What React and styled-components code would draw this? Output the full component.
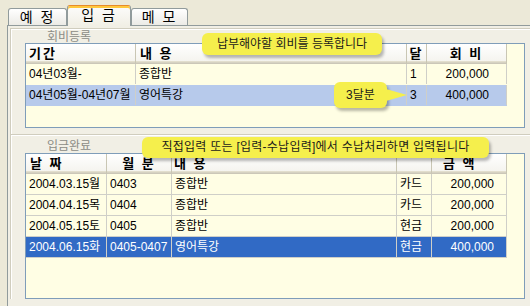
import styled, { createGlobalStyle } from "styled-components";

const GlobalStyle = createGlobalStyle`
  html, body {
    margin: 0;
    padding: 0;
    background: #ece9d8;
    overflow: hidden;
  }
  body {
    font-family: "Liberation Sans", "Noto Sans CJK KR", sans-serif;
  }
`;

const Window = styled.div`
  position: relative;
  width: 530px;
  height: 306px;
  overflow: hidden;
  padding-top: 5px;
  box-sizing: border-box;
`;

const TabStrip = styled.div`
  display: flex;
  align-items: flex-end;
  height: 20px;
  padding-left: 8px;
  position: relative;
  z-index: 2;
`;

const Tab = styled.div`
  width: ${(p) => p.$w}px;
  height: ${(p) => (p.$active ? 21 : 17)}px;
  margin-bottom: ${(p) => (p.$active ? -1 : 0)}px;
  box-sizing: border-box;
  border: 1px solid #919b9c;
  border-bottom: none;
  border-radius: 3px 3px 0 0;
  background: ${(p) =>
    p.$active
      ? "linear-gradient(#fcfcfb, #f1efe5)"
      : "linear-gradient(#ffffff, #ecebe6)"};
  border-top: ${(p) => (p.$active ? "1px solid #e68b2c" : "1px solid #919b9c")};
  box-shadow: ${(p) => (p.$active ? "inset 0 2px 0 #ffc83c" : "none")};
  font-size: 14px;
  line-height: ${(p) => (p.$active ? 19 : 16)}px;
  text-align: center;
  color: #000;
  letter-spacing: 2px;
  white-space: pre;
`;

const Panel = styled.div`
  margin-left: 7px;
  width: 560px;
  height: 300px;
  border-top: 1px solid #919b9c;
  border-left: 1px solid #919b9c;
  background: #f1efe5;
  padding: 2px 0 0 2px;
  box-sizing: border-box;
`;

const Group = styled.div`
  border-top: 1px solid #d0cdbe;
  border-left: 1px solid #d0cdbe;
  box-shadow: inset 1px 1px 0 #ffffff;
  padding: 0 0 ${(p) => p.$bottom}px 14px;
`;

const GroupLabel = styled.div`
  height: ${(p) => p.$h}px;
  padding: ${(p) => p.$top}px 0 0 22px;
  box-sizing: border-box;
  font-size: 12px;
  line-height: 13px;
  color: #8c8c86;
`;

const ListView = styled.div`
  width: 500px;
  height: ${(p) => p.$h}px;
  box-sizing: border-box;
  border: 1px solid #7f9db9;
  background: #fffee4;
  overflow: hidden;
`;

const Row = styled.div`
  display: grid;
  grid-template-columns: ${(p) => p.$cols};
  width: 481px;
  height: ${(p) => (p.$head ? 20 : 21)}px;
  box-sizing: border-box;
  background: ${(p) => p.$bg || "transparent"};
  color: ${(p) => (p.$sel === "dark" ? "#ffffff" : "#000000")};
  border-bottom: ${(p) =>
    p.$head ? "none" : p.$lines ? "1px solid #cfcfc8" : "1px solid transparent"};
`;

const HeadCell = styled.div`
  box-sizing: border-box;
  border-right: 1px solid #c9c6b4;
  background: linear-gradient(#ffffff, #f3f2ec);
  box-shadow: inset 0 -1px 0 #cbc7b8, inset 0 -2px 0 #d6d2c2, inset 0 -3px 0 #e2decd;
  font-size: 13px;
  font-weight: bold;
  line-height: 19px;
  letter-spacing: 2px;
  white-space: pre;
  text-align: ${(p) => p.$align};
  padding-left: ${(p) => p.$pad}px;
  overflow: hidden;
`;

const Cell = styled.div`
  box-sizing: border-box;
  border-right: 1px solid #cfcfc8;
  font-size: 12px;
  line-height: 20px;
  white-space: nowrap;
  overflow: hidden;
  text-align: ${(p) => p.$align};
  padding: 0 ${(p) => p.$padR || 0}px 0 ${(p) => p.$padL || 0}px;
`;

const Bubble = styled.div`
  position: absolute;
  left: ${(p) => p.$x}px;
  top: ${(p) => p.$y}px;
  width: ${(p) => p.$w}px;
  height: ${(p) => p.$h}px;
  box-sizing: border-box;
  background: #f5ef4c;
  border-radius: 6px;
  box-shadow: 2px 3px 3px rgba(0, 0, 0, 0.28);
  font-size: 12px;
  line-height: ${(p) => p.$h}px;
  letter-spacing: ${(p) => p.$ls || 0}px;
  color: #1a1a1a;
  text-align: center;
  white-space: nowrap;
  z-index: 5;
`;

const PointerBubble = styled(Bubble)`
  &::after {
    content: "";
    position: absolute;
    right: -20px;
    top: 7px;
    width: 0;
    height: 0;
    border-top: 6px solid transparent;
    border-bottom: 6px solid transparent;
    border-left: 21px solid #f5ef4c;
  }
`;

const regCols = [
  { w: 110, label: "기간", align: "left", pad: 3, dAlign: "left", padL: 3 },
  { w: 271, label: "내 용", align: "left", pad: 4, dAlign: "left", padL: 3 },
  { w: 20, label: "달", align: "center", pad: 0, dAlign: "left", padL: 3 },
  { w: 80, label: "회 비", align: "center", pad: 0, dAlign: "right", padR: 17 },
];

const regRows = [
  { cells: ["04년03월-", "종합반", "1", "200,000"] },
  { cells: ["04년05월-04년07월", "영어특강", "3", "400,000"], sel: "light" },
];

const payCols = [
  { w: 81, label: "날 짜", align: "left", pad: 4, dAlign: "left", padL: 3 },
  { w: 65, label: "월 분", align: "center", pad: 0, dAlign: "left", padL: 3 },
  { w: 225, label: "내 용", align: "left", pad: 2, dAlign: "left", padL: 3 },
  { w: 35, label: "", align: "left", pad: 0, dAlign: "left", padL: 3 },
  { w: 75, label: "금 액", align: "left", pad: 11, dAlign: "right", padR: 12 },
];

const payRows = [
  { cells: ["2004.03.15월", "0403", "종합반", "카드", "200,000"] },
  { cells: ["2004.04.15목", "0404", "종합반", "카드", "200,000"] },
  { cells: ["2004.05.15토", "0405", "종합반", "현금", "200,000"] },
  { cells: ["2004.06.15화", "0405-0407", "영어특강", "현금", "400,000"], sel: "dark" },
];

const selBg = { light: "#b7caeb", dark: "#316ac5" };

const Grid = ({ cols, rows, height, lines }) => {
  const template = cols.map((c) => c.w + "px").join(" ");
  return (
    <ListView $h={height}>
      <Row $cols={template} $head>
        {cols.map((c, i) => (
          <HeadCell key={i} $align={c.align} $pad={c.pad}>
            {c.label}
          </HeadCell>
        ))}
      </Row>
      {rows.map((r, ri) => (
        <Row key={ri} $cols={template} $lines={lines} $sel={r.sel} $bg={selBg[r.sel]}>
          {r.cells.map((v, ci) => (
            <Cell
              key={ci}
              $align={cols[ci].dAlign}
              $padL={cols[ci].padL}
              $padR={cols[ci].padR}
            >
              {v}
            </Cell>
          ))}
        </Row>
      ))}
    </ListView>
  );
};

const App = () => {
  return (
    <Window>
      <GlobalStyle />
      <TabStrip>
        <Tab $w={59}>예 정</Tab>
        <Tab $w={64} $active>
          입 금
        </Tab>
        <Tab $w={57}>메 모</Tab>
      </TabStrip>
      <Panel>
        <Group $bottom={6}>
          <GroupLabel $h={14} $top={2}>
            회비등록
          </GroupLabel>
          <Grid cols={regCols} rows={regRows} height={85} />
        </Group>
        <Group $bottom={0}>
          <GroupLabel $h={18} $top={5}>
            입금완료
          </GroupLabel>
          <Grid cols={payCols} rows={payRows} height={146} lines />
        </Group>
      </Panel>

      <Bubble $x={202} $y={33} $w={180} $h={22}>
        납부해야할 회비를 등록합니다
      </Bubble>
      <PointerBubble $x={334} $y={82} $w={53} $h={26}>
        3달분
      </PointerBubble>
      <Bubble $x={142} $y={137} $w={347} $h={21} $ls={0.25}>
        직접입력 또는 [입력-수납입력]에서 수납처리하면 입력됩니다
      </Bubble>
    </Window>
  );
};

export default App;
